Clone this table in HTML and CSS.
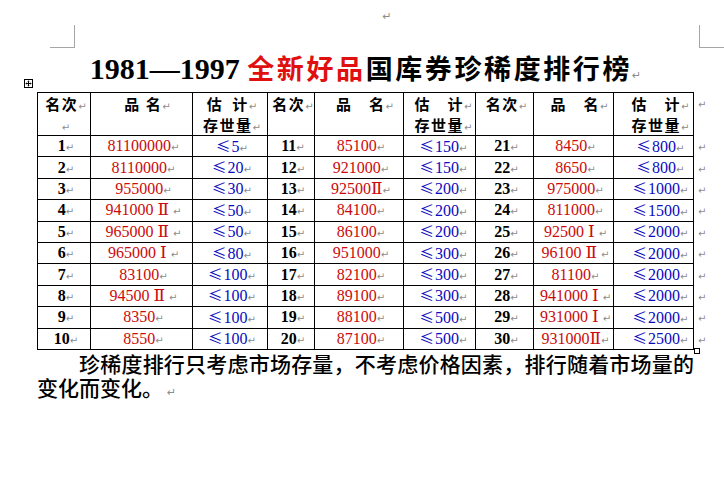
FILE: index.html
```html
<!DOCTYPE html>
<html lang="zh-CN">
<head>
<meta charset="utf-8">
<title>1981—1997 全新好品国库券珍稀度排行榜</title>
<link rel="stylesheet" href="styles.css">
</head>
<body>
<div class="page">
  <div class="top">
    <span class="corner corner-l"></span>
    <span class="pm pm-top">↵</span>
    <span class="corner corner-r"></span>
  </div>
  <h1 class="title"><span class="t-num">1981—1997 </span><span class="t-cjk t-red">全新好品</span><span class="t-cjk">国库券珍稀度排行榜</span><span class="pm pm-title">↵</span></h1>
  <div class="table-wrap">
    <span class="move-handle"><svg width="9" height="9" viewBox="0 0 9 9"><rect x="0.5" y="0.5" width="8" height="8" fill="#fff" stroke="#000"/><path d="M4.5 1.8v5.4M1.8 4.5h5.4" stroke="#000" stroke-width="1"/><path d="M4.5 1.5l-1.2 1.3h2.4zM4.5 7.5l-1.2-1.3h2.4zM1.5 4.5l1.3-1.2v2.4zM7.5 4.5l-1.3-1.2v2.4z" fill="#000"/></svg></span>
    <table class="rank">
      <colgroup>
        <col class="w-rk1"><col class="w-nm1"><col class="w-ct1">
        <col class="w-rk2"><col class="w-nm2"><col class="w-ct2">
        <col class="w-rk3"><col class="w-nm3"><col class="w-ct3">
        <col class="w-end">
      </colgroup>
      <thead>
        <tr>
          <th>名次<span class="pm">↵</span><br><span class="pm">↵</span></th>
          <th class="h-nm">品 名<span class="pm">↵</span></th>
          <th>估&ensp;计<span class="pm">↵</span><br>存世量<span class="pm">↵</span></th>
          <th>名次<span class="pm">↵</span></th>
          <th class="h-nm">品　名<span class="pm">↵</span></th>
          <th class="c6">估　计<span class="pm">↵</span><br>存世量<span class="pm">↵</span></th>
          <th>名次<span class="pm">↵</span></th>
          <th class="h-nm">品　名<span class="pm">↵</span></th>
          <th class="c9">估　计<span class="pm">↵</span><br>存世量<span class="pm">↵</span></th>
          <td class="end"><span class="pm">↵</span></td>
        </tr>
      </thead>
      <tbody>
        <tr>
          <td class="rk">1<span class="pm">↵</span></td><td class="nm">81100000<span class="pm">↵</span></td><td class="ct"><span class="le">≤</span>5<span class="pm">↵</span></td>
          <td class="rk">11<span class="pm">↵</span></td><td class="nm">85100<span class="pm">↵</span></td><td class="ct c6"><span class="le">≤</span>150<span class="pm">↵</span></td>
          <td class="rk">21<span class="pm">↵</span></td><td class="nm">8450<span class="pm">↵</span></td><td class="ct c9"><span class="le">≤</span>800<span class="pm">↵</span></td>
          <td class="end"><span class="pm">↵</span></td>
        </tr>
        <tr>
          <td class="rk">2<span class="pm">↵</span></td><td class="nm">8110000<span class="pm">↵</span></td><td class="ct"><span class="le">≤</span>20<span class="pm">↵</span></td>
          <td class="rk">12<span class="pm">↵</span></td><td class="nm">921000<span class="pm">↵</span></td><td class="ct c6"><span class="le">≤</span>150<span class="pm">↵</span></td>
          <td class="rk">22<span class="pm">↵</span></td><td class="nm">8650<span class="pm">↵</span></td><td class="ct c9"><span class="le">≤</span>800<span class="pm">↵</span></td>
          <td class="end"><span class="pm">↵</span></td>
        </tr>
        <tr>
          <td class="rk">3<span class="pm">↵</span></td><td class="nm">955000<span class="pm">↵</span></td><td class="ct"><span class="le">≤</span>30<span class="pm">↵</span></td>
          <td class="rk">13<span class="pm">↵</span></td><td class="nm">92500<span class="ro">Ⅱ</span><span class="pm">↵</span></td><td class="ct c6"><span class="le">≤</span>200<span class="pm">↵</span></td>
          <td class="rk">23<span class="pm">↵</span></td><td class="nm">975000<span class="pm">↵</span></td><td class="ct c9"><span class="le">≤</span>1000<span class="pm">↵</span></td>
          <td class="end"><span class="pm">↵</span></td>
        </tr>
        <tr>
          <td class="rk">4<span class="pm">↵</span></td><td class="nm">941000 <span class="ro">Ⅱ</span> <span class="pm">↵</span></td><td class="ct"><span class="le">≤</span>50<span class="pm">↵</span></td>
          <td class="rk">14<span class="pm">↵</span></td><td class="nm">84100<span class="pm">↵</span></td><td class="ct c6"><span class="le">≤</span>200<span class="pm">↵</span></td>
          <td class="rk">24<span class="pm">↵</span></td><td class="nm">811000<span class="pm">↵</span></td><td class="ct c9"><span class="le">≤</span>1500<span class="pm">↵</span></td>
          <td class="end"><span class="pm">↵</span></td>
        </tr>
        <tr>
          <td class="rk">5<span class="pm">↵</span></td><td class="nm">965000 <span class="ro">Ⅱ</span> <span class="pm">↵</span></td><td class="ct"><span class="le">≤</span>50<span class="pm">↵</span></td>
          <td class="rk">15<span class="pm">↵</span></td><td class="nm">86100<span class="pm">↵</span></td><td class="ct c6"><span class="le">≤</span>200<span class="pm">↵</span></td>
          <td class="rk">25<span class="pm">↵</span></td><td class="nm">92500 <span class="ro">Ⅰ</span> <span class="pm">↵</span></td><td class="ct c9"><span class="le">≤</span>2000<span class="pm">↵</span></td>
          <td class="end"><span class="pm">↵</span></td>
        </tr>
        <tr>
          <td class="rk">6<span class="pm">↵</span></td><td class="nm">965000 <span class="ro">Ⅰ</span> <span class="pm">↵</span></td><td class="ct"><span class="le">≤</span>80<span class="pm">↵</span></td>
          <td class="rk">16<span class="pm">↵</span></td><td class="nm">951000<span class="pm">↵</span></td><td class="ct c6"><span class="le">≤</span>300<span class="pm">↵</span></td>
          <td class="rk">26<span class="pm">↵</span></td><td class="nm">96100 <span class="ro">Ⅱ</span> <span class="pm">↵</span></td><td class="ct c9"><span class="le">≤</span>2000<span class="pm">↵</span></td>
          <td class="end"><span class="pm">↵</span></td>
        </tr>
        <tr>
          <td class="rk">7<span class="pm">↵</span></td><td class="nm">83100<span class="pm">↵</span></td><td class="ct"><span class="le">≤</span>100<span class="pm">↵</span></td>
          <td class="rk">17<span class="pm">↵</span></td><td class="nm">82100<span class="pm">↵</span></td><td class="ct c6"><span class="le">≤</span>300<span class="pm">↵</span></td>
          <td class="rk">27<span class="pm">↵</span></td><td class="nm">81100<span class="pm">↵</span></td><td class="ct c9"><span class="le">≤</span>2000<span class="pm">↵</span></td>
          <td class="end"><span class="pm">↵</span></td>
        </tr>
        <tr>
          <td class="rk">8<span class="pm">↵</span></td><td class="nm">94500 <span class="ro">Ⅱ</span> <span class="pm">↵</span></td><td class="ct"><span class="le">≤</span>100<span class="pm">↵</span></td>
          <td class="rk">18<span class="pm">↵</span></td><td class="nm">89100<span class="pm">↵</span></td><td class="ct c6"><span class="le">≤</span>300<span class="pm">↵</span></td>
          <td class="rk">28<span class="pm">↵</span></td><td class="nm">941000 <span class="ro">Ⅰ</span> <span class="pm">↵</span></td><td class="ct c9"><span class="le">≤</span>2000<span class="pm">↵</span></td>
          <td class="end"><span class="pm">↵</span></td>
        </tr>
        <tr>
          <td class="rk">9<span class="pm">↵</span></td><td class="nm">8350<span class="pm">↵</span></td><td class="ct"><span class="le">≤</span>100<span class="pm">↵</span></td>
          <td class="rk">19<span class="pm">↵</span></td><td class="nm">88100<span class="pm">↵</span></td><td class="ct c6"><span class="le">≤</span>500<span class="pm">↵</span></td>
          <td class="rk">29<span class="pm">↵</span></td><td class="nm">931000 <span class="ro">Ⅰ</span> <span class="pm">↵</span></td><td class="ct c9"><span class="le">≤</span>2000<span class="pm">↵</span></td>
          <td class="end"><span class="pm">↵</span></td>
        </tr>
        <tr>
          <td class="rk">10<span class="pm">↵</span></td><td class="nm">8550<span class="pm">↵</span></td><td class="ct"><span class="le">≤</span>100<span class="pm">↵</span></td>
          <td class="rk">20<span class="pm">↵</span></td><td class="nm">87100<span class="pm">↵</span></td><td class="ct c6"><span class="le">≤</span>500<span class="pm">↵</span></td>
          <td class="rk">30<span class="pm">↵</span></td><td class="nm">931000<span class="ro">Ⅱ</span><span class="pm">↵</span></td><td class="ct c9"><span class="le">≤</span>2500<span class="pm">↵</span></td>
          <td class="end"><span class="pm">↵</span></td>
        </tr>
      </tbody>
    </table>
    <span class="resize-handle"></span>
  </div>
  <p class="note">珍稀度排行只考虑市场存量，不考虑价格因素，排行随着市场量的变化而变化。</p>
</div>
</body>
</html>
```

FILE: styles.css
```css
html, body {
  margin: 0;
  padding: 0;
  background: #ffffff;
}

.page {
  width: 657px;
  padding: 0 30px 0 37px;
  font-family: "Liberation Serif", "Noto Sans CJK SC", serif;
  color: #000;
}

.pm {
  font-family: "DejaVu Sans", sans-serif;
  font-size: 10px;
  font-weight: normal;
  line-height: normal;
  color: #8c8c8c;
  letter-spacing: 0;
}

.top {
  display: flex;
  justify-content: space-between;
  align-items: flex-start;
  height: 48px;
  margin: 0 -30px 0 13px;
}

.corner {
  display: block;
  height: 23px;
  margin-top: 25px;
  border-bottom: 1px solid #a6a6a6;
  box-sizing: border-box;
}

.corner-l {
  width: 25px;
  border-right: 1px solid #a6a6a6;
}

.corner-r {
  width: 25px;
  border-left: 1px solid #a6a6a6;
}

.pm-top {
  margin-top: 10px;
  font-size: 11px;
}

.title {
  margin: 0;
  height: 44px;
  padding-top: 2px;
  box-sizing: border-box;
  text-align: center;
  line-height: 36px;
  font-size: 30px;
  font-weight: bold;
  white-space: nowrap;
}

.t-num {
  font-family: "Liberation Serif", serif;
  font-weight: bold;
}

.t-cjk {
  font-family: "Noto Sans CJK SC", sans-serif;
  font-size: 27px;
  font-weight: bold;
  letter-spacing: 2.6px;
}

.t-red {
  color: #e01010;
}

.pm-title {
  font-size: 11px;
}

.table-wrap {
  position: relative;
  width: 670px;
}

.move-handle {
  position: absolute;
  left: -13px;
  top: -13px;
  width: 9px;
  height: 9px;
  line-height: 0;
}

.resize-handle {
  position: absolute;
  left: 657px;
  top: 256px;
  width: 6px;
  height: 6px;
  box-sizing: border-box;
  border: 1px solid #000;
  background: #fff;
}

.rank {
  border-collapse: collapse;
  table-layout: fixed;
  width: 670px;
  font-family: "Liberation Serif", serif;
  font-size: 16px;
}

.w-rk1 { width: 53px; }
.w-nm1 { width: 102px; }
.w-ct1 { width: 75px; }
.w-rk2 { width: 47px; }
.w-nm2 { width: 89px; }
.w-ct2 { width: 72px; }
.w-rk3 { width: 58px; }
.w-nm3 { width: 80px; }
.w-ct3 { width: 80px; }
.w-end { width: 14px; }

.rank th,
.rank td {
  border: 1px solid #000;
  padding: 0 0 0 4px;
  text-align: center;
  white-space: nowrap;
  overflow: visible;
}

.rank thead tr {
  height: 42px;
}

.rank th {
  vertical-align: top;
  font-family: "Noto Sans CJK SC", sans-serif;
  font-size: 15px;
  font-weight: bold;
  letter-spacing: 1.5px;
  line-height: 21px;
  padding-top: 0;
}

.rank .h-nm {
  padding-left: 12px;
}

.rank tbody tr {
  height: 21.4px;
}

.rank tbody td {
  line-height: 18px;
  vertical-align: middle;
}

.rank td.end {
  border: none;
  text-align: left;
  padding-left: 4px;
}

.rank thead td.end {
  vertical-align: top;
  line-height: 20px;
}

.rk {
  font-weight: bold;
}

.nm {
  color: #cc0a0a;
}

.ct {
  color: #0a0ac0;
}

.rank .c6 {
  padding-left: 8px;
}

.rank .c9 {
  padding-left: 14px;
}

.le {
  font-family: "Noto Sans CJK SC", sans-serif;
  font-size: 14.5px;
  margin-right: 1px;
}

.ro {
  font-family: "Liberation Serif", "DejaVu Serif", serif;
  font-size: 17px;
}

.note {
  margin: 1px 0 0;
  width: 657px;
  font-family: "Noto Sans CJK SC", sans-serif;
  font-size: 21px;
  line-height: 24px;
  text-indent: 42px;
  text-align: justify;
  font-weight: 500;
}

.note::after {
  content: "↵";
  font-family: "DejaVu Sans", sans-serif;
  font-size: 11px;
  font-weight: normal;
  color: #8c8c8c;
  margin-left: 4px;
}
```
